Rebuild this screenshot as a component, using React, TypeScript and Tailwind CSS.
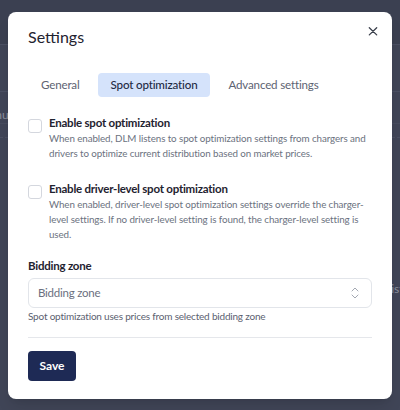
import { Fragment, useState } from "react";

const tabs = ["General", "Spot optimization", "Advanced settings"];

function CheckRow({ label, lines }: { label: string; lines: string[] }) {
  const [on, setOn] = useState(false);
  return (
    <label className="flex gap-[7px] cursor-pointer">
      <input
        type="checkbox"
        checked={on}
        onChange={() => setOn(!on)}
        className="mt-[4px] w-[14px] h-[14px] shrink-0 appearance-none rounded-[3px] border border-[#d4d7de] bg-white checked:bg-[#1e2a55]"
      />
      <div>
        <p className="text-[11.5px] tracking-[-0.02em] font-bold text-[#1f2330] leading-[15px]">{label}</p>
        <p className="mt-[1px] text-[9.8px] tracking-[-0.01em] text-[#6b7280] leading-[15px] whitespace-nowrap">
          {lines.map((l, i) => (
            <Fragment key={i}>
              {i > 0 && <br />}
              {l}
            </Fragment>
          ))}
        </p>
      </div>
    </label>
  );
}

export default function App() {
  const [tab, setTab] = useState(1);

  return (
    <div
      className="relative h-[410px] bg-[#404557] overflow-hidden"
      style={{ fontFamily: "Lato, 'Liberation Sans', sans-serif" }}
    >
      {/* dimmed page behind the dialog */}
      <div className="text-[12px] text-[#8b909c]">
        <div className="h-[45px] bg-[#3b4051] border-b border-[#4b5063]" />
        <div className="h-[47px] border-b border-[#4b5063]" />
        <div className="h-[32px] flex items-end pb-[1px] border-b border-[#474c5e]">
          <span className="ml-[-22px] leading-[14px]">Menu</span>
        </div>
        <div className="h-[14px] border-b border-dashed border-[#4b5063]" />
        <div className="h-[158px] flex items-end justify-end">
          <span className="mr-[-8px] leading-[14px]">Distr</span>
        </div>
      </div>

      {/* dialog */}
      <div className="absolute left-[8px] top-[12px] w-[384px] bg-white rounded-[8px] shadow-lg px-5 pt-[13px] pb-[18px]">
        <div className="flex items-start justify-between">
          <h2 className="text-[16px] text-[#1f2330] leading-[24px]">Settings</h2>
          <button className="mr-[-7px] text-[#3a3f4b]">
            <svg width="12" height="12" viewBox="0 0 12 12" fill="none" stroke="currentColor" strokeWidth="1.3" strokeLinecap="round">
              <path d="M2.3 2.8l7.4 7.1M9.7 2.8l-7.4 7.1" />
            </svg>
          </button>
        </div>

        <div className="mt-[24px] flex gap-[5px]">
          {tabs.map((t, i) => (
            <button
              key={t}
              onClick={() => setTab(i)}
              className={`h-[24px] px-[13px] rounded-[4px] text-[11.6px] tracking-[-0.015em] ${
                tab === i ? "bg-[#d5e3fb] text-[#1f2a44] font-medium" : "text-[#5d6372]"
              }`}
            >
              {t}
            </button>
          ))}
        </div>

        <div className="mt-[18px] flex flex-col gap-[20px]">
          <CheckRow
            label="Enable spot optimization"
            lines={[
              "When enabled, DLM listens to spot optimization settings from chargers and",
              "drivers to optimize current distribution based on market prices.",
            ]}
          />
          <CheckRow
            label="Enable driver-level spot optimization"
            lines={[
              "When enabled, driver-level spot optimization settings override the charger-",
              "level settings. If no driver-level setting is found, the charger-level setting is",
              "used.",
            ]}
          />
        </div>

        <div className="mt-[16px]">
          <p className="text-[11.5px] tracking-[-0.02em] font-bold text-[#1f2330] leading-[15px]">Bidding zone</p>
          <button className="mt-[5px] w-full h-[30px] flex items-center justify-between rounded-[6px] border border-[#e2e5ea] pl-[9px] pr-[12px]">
            <span className="text-[11.5px] tracking-[-0.02em] text-[#6b7080]">Bidding zone</span>
            <svg width="8" height="12" viewBox="0 0 8 12" fill="none" stroke="#a3a8b2" strokeWidth="1" strokeLinecap="round" strokeLinejoin="round">
              <path d="M1 4l3-3 3 3M1 8l3 3 3-3" />
            </svg>
          </button>
          <p className="mt-[1px] text-[10px] tracking-[-0.02em] leading-[15px] text-[#5b6170]">
            Spot optimization uses prices from selected bidding zone
          </p>
        </div>

        <div className="mt-[13px] border-t border-[#e5e7eb]" />

        <button className="mt-[13px] h-[30px] w-[48px] rounded-[4px] bg-[#1e2a55] text-white text-[12px] font-bold">
          Save
        </button>
      </div>
    </div>
  );
}
